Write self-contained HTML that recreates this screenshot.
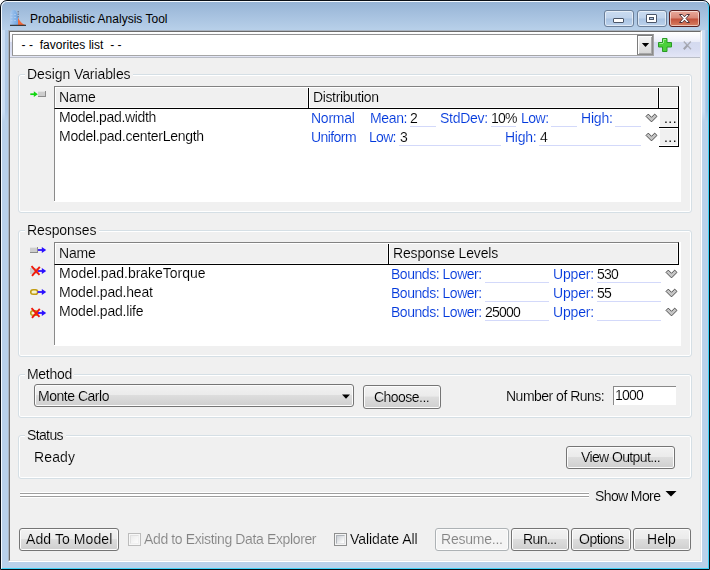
<!DOCTYPE html>
<html><head><meta charset="utf-8"><title>Probabilistic Analysis Tool</title>
<style>
html,body{margin:0;padding:0;}
body{width:710px;height:570px;position:relative;overflow:hidden;background:#fff;font-family:"Liberation Sans",Arial,sans-serif;font-size:14px;color:#000;}
.abs,.t{position:absolute;}
#win{position:absolute;left:0;top:0;width:708px;height:568px;border:1px solid #0a0f16;border-radius:7px 7px 0 0;background:linear-gradient(#96b3d4 0px,#98b5d6 2px,#a6c1df 14px,#b9d1ea 30px,#c2d8ee 34px,#c0d6ed 70px,#b9d1ea 130px);overflow:hidden;}
#win:before{content:"";position:absolute;left:0;top:0;right:0;bottom:0;border:1px solid #f4f9fe;border-bottom-color:#3fd2f7;border-right-color:#3fd2f7;border-radius:6px 6px 0 0;}
#client{position:absolute;box-sizing:border-box;left:8px;top:30px;width:694px;height:532px;border:1px solid #a9b3bf;border-right-color:#fff;border-bottom-color:#fff;background:#f0f0f0;}
#client:before{content:"";position:absolute;left:0;top:0;right:0;bottom:0;border:1px solid #6a6a6a;border-right-color:#e6e6e6;border-bottom-color:#e6e6e6;}
.t{white-space:pre;line-height:16px;height:16px;will-change:transform;}
.blue{color:#0038dc;}
.gray{color:#838383;}
.title{font-size:12px;will-change:auto;}
.gb{position:absolute;box-sizing:border-box;border:1px solid #d5dfe5;border-radius:3px;box-shadow:inset 0 0 0 1px #fff;}
.gl{position:absolute;background:#f0f0f0;padding:0 2px;white-space:pre;line-height:16px;height:16px;}
.gl span{display:inline-block;}
.ul{position:absolute;height:1px;background:#d3d9fa;}
.btn{position:absolute;box-sizing:border-box;border:1px solid #757575;border-radius:3px;background:linear-gradient(#f2f2f2 0%,#ebebeb 46%,#dddddd 50%,#cfcfcf 100%);box-shadow:inset 0 0 0 1px #fcfcfc;text-align:center;line-height:20px;white-space:pre;}
.btn.dis{border-color:#adb2b5;background:#f4f4f4;color:#838383;}
.tbl{position:absolute;background:#fff;}
.hdr{position:absolute;box-sizing:border-box;background:#f0f0f0;border-top:1px solid #828282;border-left:1px solid #828282;border-right:1px solid #000;border-bottom:1px solid #000;box-shadow:inset 1px 1px 0 #fff,inset -1px -1px 0 #fafafa;}
.dv{position:absolute;width:1px;background:#000;box-shadow:1px 0 0 #fff,-1px 0 0 #fafafa;}
.cb{position:absolute;box-sizing:border-box;width:13px;height:13px;border:1px solid #8e8f8f;background:#f4f4f4;}
.cb:before{content:"";position:absolute;box-sizing:border-box;left:1px;top:1px;width:9px;height:9px;border:1px solid;border-color:#aeb3b9 #e2e3e5 #e2e3e5 #aeb3b9;background:linear-gradient(135deg,#cbcfd5 0%,#e6e8ea 50%,#fbfbfb 85%,#fff 100%);}
.cb.dis{border-color:#bcbcbc;background:#f7f7f7;}
.cb.dis:before{border-color:#e0e0e0 #f0f0f0 #f0f0f0 #e0e0e0;background:linear-gradient(135deg,#ececec,#fcfcfc);}
.capb{position:absolute;box-sizing:border-box;border:1px solid #6b7f99;border-radius:3px;background:linear-gradient(#c9dbf0 0%,#bfd3ec 48%,#a9c3e2 52%,#bcd2ec 100%);box-shadow:inset 0 0 0 1px rgba(255,255,255,.55);}
.capb.close{border-color:#5a1f1f;background:linear-gradient(#e9a99b 0%,#d98877 48%,#c2503a 52%,#d77f62 100%);}
.chev{position:absolute;width:13px;height:10px;}
</style></head><body>
<div id="win"></div>
<div id="client"></div>

<div class="abs" style="left:2px;top:30px;width:6px;height:92px;background:linear-gradient(to right,#cddff3 0%,#c9dcf2 45%,#b0cae7 55%,#b0cae7 100%);-webkit-mask-image:linear-gradient(#000 88%,transparent);mask-image:linear-gradient(#000 88%,transparent)"></div>
<div class="abs" style="left:702px;top:30px;width:6px;height:92px;background:linear-gradient(to right,#cddff3 0%,#c9dcf2 50%,#a9c5e5 62%,#a9c5e5 100%);-webkit-mask-image:linear-gradient(#000 88%,transparent);mask-image:linear-gradient(#000 88%,transparent)"></div>
<!-- title bar -->
<svg class="abs" style="left:8px;top:8px" width="20" height="20" viewBox="8 8 20 20">
 <defs><linearGradient id="ig" x1="0" y1="0" x2="1" y2="0"><stop offset="0" stop-color="#a9c9ee"/><stop offset="1" stop-color="#6fa5e2"/></linearGradient></defs>
 <path d="M10 25 L10 15 C10 11.500 11.500 9.800 13.500 9.800 C16 9.800 17 13 18 17 L18 25 Z" fill="url(#ig)"/>
 <path d="M10.500 14.500 L16 14.500 M10.500 17.500 L17 17.500 M10.500 20.500 L17.500 20.500" stroke="#b4d0f0" stroke-width="0.7" stroke-dasharray="2 1.500"/>
 <path d="M18 17.500 C19.500 21 22 24 25.500 25 L18 25 Z" fill="#f26a3c"/>
 <path d="M18.200 11 L18.200 18" stroke="#445" stroke-width="0.7" stroke-dasharray="1.500 1" fill="none"/>
 <rect x="10" y="24.800" width="16" height="1.100" fill="#2c2c2c"/>
</svg>
<div class="capb" style="left:604px;top:10px;width:30px;height:17px"></div>
<div class="abs" style="left:613px;top:18px;width:11px;height:5px;background:#fff;border:1px solid #4a5568;box-sizing:border-box;border-radius:1px"></div>
<div class="capb" style="left:637px;top:10px;width:30px;height:17px"></div>
<div class="abs" style="left:646px;top:14px;width:11px;height:9px;box-sizing:border-box;border:1px solid #4a5568;background:#fff;border-radius:1px"></div>
<div class="abs" style="left:649px;top:17px;width:5px;height:3px;box-sizing:border-box;border:1px solid #4a5568;background:#b0c6e2"></div>
<div class="capb close" style="left:669px;top:10px;width:31px;height:17px"></div>
<svg class="abs" style="left:678px;top:13px" width="13" height="11" viewBox="0 0 13 11"><path d="M1.500 1.500 L4.300 1.500 L6.500 3.800 L8.700 1.500 L11.500 1.500 L8 5.500 L11.500 9.500 L8.700 9.500 L6.500 7.200 L4.300 9.500 L1.500 9.500 L5 5.500 Z" fill="#fff" stroke="#4a3038" stroke-width="1" stroke-linejoin="round"/></svg>

<!-- toolbar -->
<div class="abs" style="left:10px;top:32px;width:690px;height:25px;background:linear-gradient(#ffffff 0%,#f4f5fc 25%,#ebedf8 38%,#d4daef 42%,#d7dcf1 70%,#e3e6f6 100%);border-bottom:1px solid #b9bdc6"></div>
<div class="abs" style="left:12px;top:34px;width:642px;height:22px;box-sizing:border-box;border:1px solid #919191;border-right-color:#a6a6a6;border-bottom-color:#a6a6a6;background:#fff"></div>
<div class="abs" style="left:637px;top:35px;width:16px;height:20px;box-sizing:border-box;border:1px solid #7c7c7c;border-right-color:#8a8a8a;border-bottom-color:#8a8a8a;background:linear-gradient(#f6f6f6,#d6d6d6);box-shadow:inset 1px 1px 0 #fff,inset -1px -1px 0 #a8a8a8"></div>
<svg class="abs" style="left:641px;top:42px" width="9" height="6" viewBox="0 0 9 6"><path d="M0.800 1 L8.200 1 L4.500 5 Z" fill="#000"/></svg>
<svg class="abs" style="left:657px;top:37px" width="16" height="16" viewBox="0 0 16 16"><path d="M5.500 1.500 L10 1.500 L10 5.500 L14.500 5.500 L14.500 10 L10 10 L10 14.500 L5.500 14.500 L5.500 10 L1.500 10 L1.500 5.500 L5.500 5.500 Z" fill="#4bd03a" stroke="#2a9a26" stroke-width="1"/><path d="M6.500 2.500 L9 2.500 M2.500 6.500 L6 6.500 M6.500 2.500 L6.500 6" stroke="#9af08c" stroke-width="1"/></svg>
<svg class="abs" style="left:682px;top:40px" width="11" height="11" viewBox="0 0 11 11"><path d="M1.800 1.500 L9 9.200 M8.800 1.500 L5.500 5.200" stroke="#a9abb5" stroke-width="1.300" fill="none"/><path d="M5.500 5.200 L1.800 9.200" stroke="#a0a2ac" stroke-width="2" fill="none"/></svg>

<!-- Design Variables group -->
<div class="gb" style="left:18px;top:74px;width:674px;height:139px"></div>
<div class="gl" style="left:25px;top:73px;width:108px;height:4px;padding:0"></div>
<!-- icon -->
<svg class="abs" style="left:30px;top:89px" width="17" height="9" viewBox="0 0 17 9"><path d="M0.300 5.200 L5 5.200" stroke="#0fd60f" stroke-width="1.700"/><path d="M3.800 2.300 L7.800 5.200 L3.800 8.100 Z" fill="#0fd60f"/><rect x="8" y="2" width="8" height="6" fill="#8c8c8c"/><rect x="8" y="2" width="7" height="5" fill="#cdcdcd"/><path d="M8 2.500 L15 2.500" stroke="#e4e4e4" stroke-width="1"/></svg>
<div class="tbl" style="left:54px;top:86px;width:627px;height:116px"></div>
<div class="hdr" style="left:54px;top:86px;width:625px;height:23px"></div>
<div class="dv" style="left:308px;top:88px;height:20px"></div>
<div class="dv" style="left:658px;top:88px;height:20px"></div>
<div class="abs" style="left:54px;top:109px;width:1px;height:92px;background:#8a8a8a"></div>
<!-- row 1 -->
<div class="ul" style="left:410px;top:126px;width:26px"></div>
<div class="ul" style="left:491px;top:126px;width:25px"></div>
<div class="ul" style="left:551px;top:126px;width:26px"></div>
<div class="ul" style="left:615px;top:126px;width:26px"></div>
<!-- row 2 -->
<div class="ul" style="left:399px;top:145px;width:102px"></div>
<div class="ul" style="left:539px;top:145px;width:102px"></div>
<!-- chevrons & dots -->

<svg class="chev" style="left:645px;top:113px" viewBox="0 0 13 10"><path d="M1 3.400 L3.300 1.100 L6.500 4.300 L9.700 1.100 L12 3.400 L6.500 8.900 Z" fill="#c6c6c6" stroke="#3a3a3a" stroke-width="0.85"/></svg>
<svg class="chev" style="left:645px;top:132px" viewBox="0 0 13 10"><path d="M1 3.400 L3.300 1.100 L6.500 4.300 L9.700 1.100 L12 3.400 L6.500 8.900 Z" fill="#c6c6c6" stroke="#3a3a3a" stroke-width="0.85"/></svg>
<div class="abs" style="left:659px;top:109px;width:19px;height:18px;background:#fff"></div>
<div class="abs" style="left:660px;top:110px;width:17px;height:17px;background:#f0f0f0"></div>
<div class="abs" style="left:659px;top:128px;width:19px;height:18px;background:#fff"></div>
<div class="abs" style="left:660px;top:129px;width:17px;height:16px;background:#f0f0f0"></div>
<div class="abs" style="left:659px;top:127px;width:20px;height:1px;background:#000"></div>
<div class="abs" style="left:659px;top:146px;width:20px;height:1px;background:#000"></div>
<div class="abs" style="left:678px;top:109px;width:1px;height:38px;background:#000"></div>
<!-- Responses group -->
<div class="gb" style="left:18px;top:230px;width:674px;height:127px"></div>
<div class="gl" style="left:25px;top:229px;width:74px;height:4px;padding:0"></div>
<div class="tbl" style="left:54px;top:242px;width:627px;height:104px"></div>
<div class="hdr" style="left:54px;top:242px;width:625px;height:23px"></div>
<div class="dv" style="left:388px;top:244px;height:20px"></div>
<div class="abs" style="left:54px;top:265px;width:1px;height:80px;background:#8a8a8a"></div>
<!-- icons -->
<svg class="abs" style="left:30px;top:246px" width="17" height="9" viewBox="0 0 17 9"><rect x="0" y="1" width="8" height="6" fill="#8c8c8c"/><rect x="0" y="1" width="7" height="5" fill="#cdcdcd"/><path d="M0 1.500 L7 1.500" stroke="#e4e4e4" stroke-width="1"/><path d="M8 4 L13 4" stroke="#3a1cff" stroke-width="1.900"/><path d="M11.800 1 L16.200 4 L11.800 7 Z" fill="#2a10ff"/></svg>
<svg class="abs" style="left:30px;top:265px" width="17" height="13" viewBox="0 0 17 13"><rect x="0" y="3" width="7" height="6" fill="#cfcfcf"/><path d="M7.500 6 L13 6" stroke="#3a1cff" stroke-width="1.900"/><path d="M11.800 3 L16.200 6 L11.800 9 Z" fill="#2a10ff"/><path d="M1.500 1.200 L9.500 9.800 M9.800 1.800 L2 10.800" stroke="#f01a0a" stroke-width="1.900" fill="none"/></svg>
<svg class="abs" style="left:30px;top:286px" width="17" height="13" viewBox="0 0 17 13"><rect x="0.700" y="3.700" width="7" height="4.600" rx="2.300" fill="#f6f3cc" stroke="#c29c12" stroke-width="1.600"/><path d="M7.500 6 L13 6" stroke="#3a1cff" stroke-width="1.900"/><path d="M11.800 3 L16.200 6 L11.800 9 Z" fill="#2a10ff"/></svg>
<svg class="abs" style="left:30px;top:306.5px" width="17" height="13" viewBox="0 0 17 13"><rect x="0.700" y="3.700" width="7" height="4.600" rx="2.300" fill="#f6f3cc" stroke="#c29c12" stroke-width="1.600"/><path d="M7.500 6 L13 6" stroke="#3a1cff" stroke-width="1.900"/><path d="M11.800 3 L16.200 6 L11.800 9 Z" fill="#2a10ff"/><path d="M1.500 1.200 L9.500 9.800 M9.800 1.800 L2 10.800" stroke="#f01a0a" stroke-width="1.900" fill="none"/></svg>
<!-- rows -->
<div class="ul" style="left:485px;top:282px;width:64px"></div>
<div class="ul" style="left:485px;top:301px;width:64px"></div>
<div class="ul" style="left:485px;top:320px;width:64px"></div>
<div class="ul" style="left:597px;top:282px;width:64px"></div>
<div class="ul" style="left:597px;top:301px;width:64px"></div>
<div class="ul" style="left:597px;top:320px;width:64px"></div>

<svg class="chev" style="left:665px;top:269px" viewBox="0 0 13 10"><path d="M1 3.400 L3.300 1.100 L6.500 4.300 L9.700 1.100 L12 3.400 L6.500 8.900 Z" fill="#c6c6c6" stroke="#3a3a3a" stroke-width="0.85"/></svg>
<svg class="chev" style="left:665px;top:288px" viewBox="0 0 13 10"><path d="M1 3.400 L3.300 1.100 L6.500 4.300 L9.700 1.100 L12 3.400 L6.500 8.900 Z" fill="#c6c6c6" stroke="#3a3a3a" stroke-width="0.85"/></svg>
<svg class="chev" style="left:665px;top:307px" viewBox="0 0 13 10"><path d="M1 3.400 L3.300 1.100 L6.500 4.300 L9.700 1.100 L12 3.400 L6.500 8.900 Z" fill="#c6c6c6" stroke="#3a3a3a" stroke-width="0.85"/></svg>
<!-- Method group -->
<div class="gb" style="left:18px;top:374px;width:674px;height:44px"></div>
<div class="gl" style="left:25px;top:373px;width:49px;height:4px;padding:0"></div>
<div class="btn" style="left:34px;top:384px;width:320px;height:23px;text-align:left"></div>
<svg class="abs" style="left:342px;top:394px" width="8" height="5" viewBox="0 0 8 5"><path d="M0 0.500 L8 0.500 L4 4.800 Z" fill="#000"/></svg>
<div class="btn" style="left:363px;top:385px;width:78px;height:24px"></div>
<div class="abs" style="left:613px;top:386px;width:63px;height:19px;box-sizing:border-box;background:#fff;border-top:1px solid #8a8a8a;border-left:1px solid #8a8a8a"></div>

<!-- Status group -->
<div class="gb" style="left:18px;top:435px;width:674px;height:44px"></div>
<div class="gl" style="left:25px;top:434px;width:41px;height:4px;padding:0"></div>
<div class="btn" style="left:566px;top:446px;width:109px;height:23px"></div>

<!-- separator -->
<div class="abs" style="left:20px;top:492px;width:569px;height:6px;background:linear-gradient(#fff 0,#fff 1px,#9e9e9e 1px,#9e9e9e 2px,#fff 2px,#fff 4px,#9e9e9e 4px,#9e9e9e 5px,#fff 5px,#fff 6px)"></div>
<svg class="abs" style="left:665px;top:491px" width="12" height="6" viewBox="0 0 12 6"><path d="M0.500 0 L11.500 0 L6 5.500 Z" fill="#000"/></svg>

<!-- bottom row -->
<div class="btn" style="left:19px;top:528px;width:100px;height:23px"></div>
<div class="cb dis" style="left:128px;top:533px"></div>
<div class="cb" style="left:334px;top:533px"></div>
<div class="btn dis" style="left:435px;top:528px;width:74px;height:23px"></div>
<div class="btn" style="left:511px;top:528px;width:58px;height:23px"></div>
<div class="btn" style="left:571px;top:528px;width:60px;height:23px"></div>
<div class="btn" style="left:633px;top:528px;width:58px;height:23px"></div>
<div class="t title" style="left:30.1px;top:11.3px;letter-spacing:0.01px">Probabilistic Analysis Tool</div>
<div class="t title" style="left:21.5px;top:36.5px;letter-spacing:0.03px">- -  favorites list  - -</div>
<div class="t" style="left:26.9px;top:66px;letter-spacing:-0.08px;-webkit-text-stroke:0.12px #f0f0f0">Design Variables</div>
<div class="t" style="left:59px;top:89px;letter-spacing:-0.21px;-webkit-text-stroke:0.12px #f0f0f0">Name</div>
<div class="t" style="left:312.8px;top:89px;letter-spacing:-0.37px;-webkit-text-stroke:0.12px #f0f0f0">Distribution</div>
<div class="t" style="left:59px;top:109px;letter-spacing:-0.33px;-webkit-text-stroke:0.12px #fff">Model.pad.width</div>
<div class="t blue" style="left:311.1px;top:110px;letter-spacing:-0.26px;-webkit-text-stroke:0.12px #fff">Normal</div>
<div class="t blue" style="left:369.9px;top:110px;letter-spacing:-0.35px;-webkit-text-stroke:0.12px #fff">Mean:</div>
<div class="t" style="left:410.3px;top:110px;letter-spacing:-0.78px;-webkit-text-stroke:0.12px #fff">2</div>
<div class="t blue" style="left:439.9px;top:110px;letter-spacing:-0.26px;-webkit-text-stroke:0.12px #fff">StdDev:</div>
<div class="t" style="left:491.1px;top:110px;letter-spacing:-0.78px;-webkit-text-stroke:0.12px #fff">10%</div>
<div class="t blue" style="left:520.7px;top:110px;letter-spacing:-0.48px;-webkit-text-stroke:0.12px #fff">Low:</div>
<div class="t blue" style="left:581.1px;top:110px;letter-spacing:-0.21px;-webkit-text-stroke:0.12px #fff">High:</div>
<div class="t" style="left:59px;top:128px;letter-spacing:-0.28px;-webkit-text-stroke:0.12px #fff">Model.pad.centerLength</div>
<div class="t blue" style="left:311.2px;top:129px;letter-spacing:-0.57px;-webkit-text-stroke:0.12px #fff">Uniform</div>
<div class="t blue" style="left:368.9px;top:129px;letter-spacing:-0.72px;-webkit-text-stroke:0.12px #fff">Low:</div>
<div class="t" style="left:399.5px;top:129px;letter-spacing:-0.78px;-webkit-text-stroke:0.12px #fff">3</div>
<div class="t blue" style="left:505px;top:129px;letter-spacing:-0.24px;-webkit-text-stroke:0.12px #fff">High:</div>
<div class="t" style="left:540px;top:129px;letter-spacing:-0.78px;-webkit-text-stroke:0.12px #fff">4</div>
<div class="t" style="left:663.9px;top:110px;letter-spacing:0.44px">...</div>
<div class="t" style="left:663.9px;top:129px;letter-spacing:0.44px">...</div>
<div class="t" style="left:26.8px;top:222px;letter-spacing:-0.08px;-webkit-text-stroke:0.12px #f0f0f0">Responses</div>
<div class="t" style="left:59px;top:245px;letter-spacing:-0.21px;-webkit-text-stroke:0.12px #f0f0f0">Name</div>
<div class="t" style="left:392.8px;top:245px;letter-spacing:-0.15px;-webkit-text-stroke:0.12px #f0f0f0">Response Levels</div>
<div class="t" style="left:59px;top:265px;letter-spacing:-0.03px;-webkit-text-stroke:0.12px #fff">Model.pad.brakeTorque</div>
<div class="t" style="left:59px;top:284px;letter-spacing:-0.2px;-webkit-text-stroke:0.12px #fff">Model.pad.heat</div>
<div class="t" style="left:59px;top:303px;letter-spacing:-0.2px;-webkit-text-stroke:0.12px #fff">Model.pad.life</div>
<div class="t blue" style="left:390.8px;top:266px;letter-spacing:-0.47px;-webkit-text-stroke:0.12px #fff">Bounds: Lower:</div>
<div class="t blue" style="left:390.8px;top:285px;letter-spacing:-0.47px;-webkit-text-stroke:0.12px #fff">Bounds: Lower:</div>
<div class="t blue" style="left:390.8px;top:304px;letter-spacing:-0.47px;-webkit-text-stroke:0.12px #fff">Bounds: Lower:</div>
<div class="t" style="left:484.9px;top:304px;letter-spacing:-0.78px;-webkit-text-stroke:0.12px #fff">25000</div>
<div class="t blue" style="left:552.7px;top:266px;letter-spacing:-0.17px;-webkit-text-stroke:0.12px #fff">Upper:</div>
<div class="t blue" style="left:552.7px;top:285px;letter-spacing:-0.17px;-webkit-text-stroke:0.12px #fff">Upper:</div>
<div class="t blue" style="left:552.7px;top:304px;letter-spacing:-0.17px;-webkit-text-stroke:0.12px #fff">Upper:</div>
<div class="t" style="left:597.1px;top:266px;letter-spacing:-0.78px;-webkit-text-stroke:0.12px #fff">530</div>
<div class="t" style="left:597.1px;top:285px;letter-spacing:-0.78px;-webkit-text-stroke:0.12px #fff">55</div>
<div class="t" style="left:26.8px;top:366px;letter-spacing:-0.29px;-webkit-text-stroke:0.12px #f0f0f0">Method</div>
<div class="t" style="left:37.8px;top:388px;letter-spacing:-0.48px;-webkit-text-stroke:0.12px #e6e6e6">Monte Carlo</div>
<div class="t" style="left:374.4px;top:389px;letter-spacing:-0.53px;-webkit-text-stroke:0.12px #e6e6e6">Choose...</div>
<div class="t" style="left:506px;top:388px;letter-spacing:-0.51px;-webkit-text-stroke:0.12px #f0f0f0">Number of Runs:</div>
<div class="t" style="left:614.9px;top:387px;letter-spacing:-0.78px;-webkit-text-stroke:0.12px #fff">1000</div>
<div class="t" style="left:27.1px;top:427px;letter-spacing:-0.63px;-webkit-text-stroke:0.12px #f0f0f0">Status</div>
<div class="t" style="left:33.8px;top:449px;letter-spacing:0.14px;-webkit-text-stroke:0.12px #f0f0f0">Ready</div>
<div class="t" style="left:581.1px;top:449px;letter-spacing:-0.62px;-webkit-text-stroke:0.12px #e6e6e6">View Output...</div>
<div class="t" style="left:595.4px;top:488px;letter-spacing:-0.61px;-webkit-text-stroke:0.12px #f0f0f0">Show More</div>
<div class="t" style="left:26.1px;top:531px;letter-spacing:0.09px;-webkit-text-stroke:0.12px #e6e6e6">Add To Model</div>
<div class="t gray" style="left:144.2px;top:531px;letter-spacing:-0.37px;-webkit-text-stroke:0.12px #f0f0f0">Add to Existing Data Explorer</div>
<div class="t" style="left:349.9px;top:531px;letter-spacing:-0.06px;-webkit-text-stroke:0.12px #f0f0f0">Validate All</div>
<div class="t gray" style="left:441px;top:531px;letter-spacing:-0.23px;-webkit-text-stroke:0.12px #f4f4f4">Resume...</div>
<div class="t" style="left:522.6px;top:531px;letter-spacing:-0.62px;-webkit-text-stroke:0.12px #e6e6e6">Run...</div>
<div class="t" style="left:578.7px;top:531px;letter-spacing:-0.49px;-webkit-text-stroke:0.12px #e6e6e6">Options</div>
<div class="t" style="left:646.8px;top:531px;letter-spacing:0.03px;-webkit-text-stroke:0.12px #e6e6e6">Help</div>
</body></html>
